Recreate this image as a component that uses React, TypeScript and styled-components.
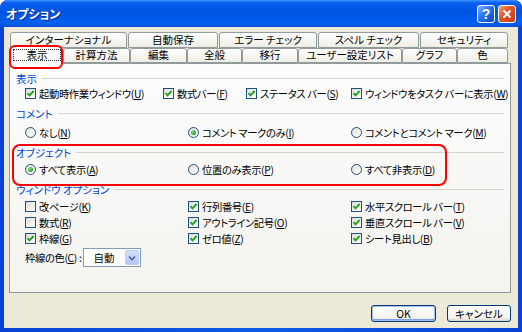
import styled, { createGlobalStyle } from "styled-components";

const GlobalStyle = createGlobalStyle`
    html, body {
        margin: 0;
        padding: 0;
        background: #ffffff;
    }
    body {
        font-family: "Noto Sans CJK JP", "Noto Sans", sans-serif;
        font-feature-settings: "palt";
        color: #000000;
    }
`;

const Window = styled.div`
    width: 522px;
    height: 332px;
    display: flex;
    flex-direction: column;
    border-radius: 8px 8px 0 0;
    overflow: hidden;
    background: linear-gradient(to right, #0842d6, #0d5ae8 50%, #0842d6);
`;

const TitleBar = styled.div`
    height: 27px;
    flex: none;
    display: flex;
    align-items: center;
    padding: 0 6px 0 6px;
    box-sizing: border-box;
    background: linear-gradient(
        to bottom,
        #3d95ff 0%,
        #0a5fee 10%,
        #0054e3 45%,
        #0160f0 85%,
        #0a4fd6 100%
    );
`;

const Title = styled.div`
    flex: 1;
    color: #ffffff;
    font-size: 12px;
    font-weight: 700;
    text-shadow: 1px 1px 0 #0b2f9a;
`;

const CaptionButton = styled.div<{ $variant: "help" | "close" }>`
    width: 18px;
    height: 18px;
    margin-left: 3px;
    box-sizing: border-box;
    border: 1px solid #ffffff;
    border-radius: 3px;
    display: flex;
    align-items: center;
    justify-content: center;
    color: #ffffff;
    font-family: "Liberation Sans", sans-serif;
    font-weight: 700;
    font-size: 14px;
    background: ${(p) =>
        p.$variant === "close"
            ? "linear-gradient(135deg, #f0a080 0%, #e2582c 40%, #c53a12 100%)"
            : "linear-gradient(135deg, #8bb8ff 0%, #2f76f0 40%, #1148c8 100%)"};
`;

const Body = styled.div`
    flex: 1;
    margin: 0 4px 4px 4px;
    background: #ece9d8;
    padding: 5px 0 6px 5px;
    display: flex;
    flex-direction: column;
`;

const TabStrip = styled.div`
    display: flex;
    flex-direction: column;
    margin-left: 1px;
    position: relative;
    z-index: 1;
`;

const TabRow = styled.div<{ $h: number; $gap: number }>`
    display: flex;
    height: ${(p) => p.$h}px;
    gap: ${(p) => p.$gap}px;
    align-items: flex-end;
`;

const Tab = styled.div<{ $w: number; $selected?: boolean }>`
    width: ${(p) => p.$w}px;
    height: ${(p) => (p.$selected ? "18px" : "100%")};
    margin-bottom: ${(p) => (p.$selected ? "-1px" : "0")};
    box-sizing: border-box;
    border: 1px solid #919b9c;
    border-bottom: ${(p) => (p.$selected ? "none" : "1px solid #919b9c")};
    border-radius: 3px 3px 0 0;
    background: ${(p) =>
        p.$selected ? "#fcfcfe" : "linear-gradient(#ffffff, #eeede5)"};
    display: flex;
    align-items: center;
    justify-content: center;
    font-size: 10.5px;
    line-height: 1;
    white-space: nowrap;
    position: relative;
`;

const FocusRect = styled.span`
    position: absolute;
    left: 2px;
    right: 1px;
    top: 2px;
    bottom: 3px;
    border: 1px dotted #333333;
    display: flex;
    align-items: center;
    justify-content: center;
`;

const Annotation = styled.span<{ $r: number }>`
    position: absolute;
    border: 2px solid #ff0000;
    border-radius: ${(p) => p.$r}px;
    pointer-events: none;
`;

const Panel = styled.div`
    width: 502px;
    height: 230px;
    box-sizing: border-box;
    border: 1px solid #919b9c;
    background: linear-gradient(#fcfcfe, #f4f3ee);
    padding: 7px 6px 0 6px;
    display: flex;
    flex-direction: column;
`;

const SectionLabel = styled.div<{ $mt?: number }>`
    height: 14px;
    margin-top: ${(p) => p.$mt ?? 0}px;
    display: flex;
    align-items: center;
    color: #0046d5;
    font-size: 10.5px;
    white-space: nowrap;
    &::after {
        content: "";
        flex: 1;
        height: 1px;
        margin-left: 5px;
        background: #d6d5c9;
    }
`;

const OptionRow = styled.div<{ $cols: string; $mt?: number }>`
    display: grid;
    grid-template-columns: ${(p) => p.$cols};
    height: 16px;
    margin-top: ${(p) => p.$mt ?? 0}px;
    padding-left: 9px;
    align-items: center;
`;

const Item = styled.label`
    display: flex;
    align-items: center;
    gap: 3px;
    font-size: 10.3px;
    white-space: nowrap;
    letter-spacing: -0.35px;
`;

const Box = styled.span`
    width: 11px;
    height: 11px;
    flex: none;
    box-sizing: border-box;
    border: 1px solid #1c5180;
    background: linear-gradient(135deg, #dcdcd7 0%, #f4f4f0 60%, #ffffff 100%);
    display: flex;
    align-items: center;
    justify-content: center;
`;

const Round = styled.span<{ $on?: boolean }>`
    width: 11px;
    height: 11px;
    flex: none;
    box-sizing: border-box;
    border: 1px solid #1c5180;
    border-radius: 50%;
    background: linear-gradient(135deg, #dcdcd7 0%, #f4f4f0 60%, #ffffff 100%);
    display: flex;
    align-items: center;
    justify-content: center;
    &::after {
        content: "";
        display: ${(p) => (p.$on ? "block" : "none")};
        width: 5px;
        height: 5px;
        border-radius: 50%;
        background: radial-gradient(circle at 35% 35%, #8ee07a, #21a121 70%);
    }
`;

const Highlight = styled.div`
    position: relative;
    display: flex;
    flex-direction: column;
`;

const ColorRow = styled.div`
    display: flex;
    align-items: center;
    gap: 2px;
    margin-top: 2px;
    padding-left: 9px;
    height: 19px;
    font-size: 10.3px;
    letter-spacing: -0.35px;
`;

const Select = styled.div`
    width: 58px;
    height: 19px;
    box-sizing: border-box;
    border: 1px solid #7f9db9;
    background: #ffffff;
    display: flex;
    align-items: center;
    padding: 0 1px 0 9px;
    font-size: 10.5px;
    letter-spacing: 0;
`;

const SelectValue = styled.span`
    flex: 1;
`;

const DropButton = styled.span`
    width: 14px;
    height: 15px;
    box-sizing: border-box;
    border: 1px solid #bad0f8;
    border-radius: 2px;
    background: linear-gradient(#d3e0fc, #b4c8f6);
    display: flex;
    align-items: center;
    justify-content: center;
`;

const Footer = styled.div`
    width: 502px;
    margin-top: 12px;
    display: flex;
    justify-content: flex-end;
    gap: 11px;
`;

const PushButton = styled.div<{ $w: number; $default?: boolean }>`
    width: ${(p) => p.$w}px;
    height: 17px;
    box-sizing: border-box;
    border: 1px solid #003c74;
    border-radius: 3px;
    background: linear-gradient(#ffffff, #f3f3ef 80%, #d6d0c5);
    box-shadow: ${(p) =>
        p.$default
            ? "inset 0 0 0 1px #a9c0ee, inset 0 -1px 0 1px #7f9fe0"
            : "none"};
    display: flex;
    align-items: center;
    justify-content: center;
    font-size: 10.5px;
`;

function Check() {
    return (
        <svg width="9" height="9" viewBox="0 0 9 9">
            <path
                d="M1.5 4.2 L3.5 6.3 L7.6 2"
                fill="none"
                stroke="#21a121"
                strokeWidth="1.9"
            />
        </svg>
    );
}

function Label({ text, k }: { text: string; k: string }) {
    return (
        <span>
            {text}(<u>{k}</u>)
        </span>
    );
}

function CheckItem({ text, k, on }: { text: string; k: string; on?: boolean }) {
    return (
        <Item>
            <Box>{on && <Check />}</Box>
            <Label text={text} k={k} />
        </Item>
    );
}

function RadioItem({ text, k, on }: { text: string; k: string; on?: boolean }) {
    return (
        <Item>
            <Round $on={on} />
            <Label text={text} k={k} />
        </Item>
    );
}

const row1 = [
    { w: 117, t: "インターナショナル" },
    { w: 90, t: "自動保存" },
    { w: 98, t: "エラー チェック" },
    { w: 101, t: "スペル チェック" },
    { w: 88, t: "セキュリティ" },
];

const row2 = [
    { w: 67, t: "計算方法" },
    { w: 57, t: "編集" },
    { w: 55, t: "全般" },
    { w: 56, t: "移行" },
    { w: 104, t: "ユーザー設定リスト" },
    { w: 55, t: "グラフ" },
    { w: 51, t: "色" },
];

const threeCols = "163px 163px 1fr";

export default function App() {
    return (
        <>
            <GlobalStyle />
            <Window>
                <TitleBar>
                    <Title>オプション</Title>
                    <CaptionButton $variant="help">?</CaptionButton>
                    <CaptionButton $variant="close">
                        <svg width="10" height="10" viewBox="0 0 10 10">
                            <path
                                d="M1.5 1.5 L8.5 8.5 M8.5 1.5 L1.5 8.5"
                                stroke="#ffffff"
                                strokeWidth="2"
                            />
                        </svg>
                    </CaptionButton>
                </TitleBar>
                <Body>
                    <TabStrip>
                        <TabRow $h={16} $gap={1}>
                            {row1.map((tab) => (
                                <Tab key={tab.t} $w={tab.w}>
                                    {tab.t}
                                </Tab>
                            ))}
                        </TabRow>
                        <TabRow $h={15} $gap={0}>
                            <Tab $w={53} $selected>
                                <FocusRect>表示</FocusRect>
                                <Annotation
                                    $r={6}
                                    style={{ left: -2, right: -1, top: -2, bottom: -5 }}
                                />
                            </Tab>
                            {row2.map((tab) => (
                                <Tab key={tab.t} $w={tab.w}>
                                    {tab.t}
                                </Tab>
                            ))}
                        </TabRow>
                    </TabStrip>
                    <Panel>
                        <SectionLabel>表示</SectionLabel>
                        <OptionRow $cols="138px 83px 105px 1fr">
                            <CheckItem text="起動時作業ウィンドウ" k="U" on />
                            <CheckItem text="数式バー" k="F" on />
                            <CheckItem text="ステータス バー" k="S" on />
                            <CheckItem text="ウィンドウをタスク バーに表示" k="W" on />
                        </OptionRow>

                        <SectionLabel $mt={5}>コメント</SectionLabel>
                        <OptionRow $cols={threeCols} $mt={4}>
                            <RadioItem text="なし" k="N" />
                            <RadioItem text="コメント マークのみ" k="I" on />
                            <RadioItem text="コメントとコメント マーク" k="M" />
                        </OptionRow>

                        <Highlight>
                            <SectionLabel $mt={5}>オブジェクト</SectionLabel>
                            <OptionRow $cols={threeCols} $mt={2}>
                                <RadioItem text="すべて表示" k="A" on />
                                <RadioItem text="位置のみ表示" k="P" />
                                <RadioItem text="すべて非表示" k="D" />
                            </OptionRow>
                            <Annotation
                                $r={8}
                                style={{ left: -4, top: 4, width: 431, height: 38 }}
                            />
                        </Highlight>

                        <SectionLabel $mt={5}>ウィンドウ オプション</SectionLabel>
                        <OptionRow $cols={threeCols} $mt={2}>
                            <CheckItem text="改ページ" k="K" />
                            <CheckItem text="行列番号" k="E" on />
                            <CheckItem text="水平スクロール バー" k="T" on />
                        </OptionRow>
                        <OptionRow $cols={threeCols}>
                            <CheckItem text="数式" k="R" />
                            <CheckItem text="アウトライン記号" k="O" on />
                            <CheckItem text="垂直スクロール バー" k="V" on />
                        </OptionRow>
                        <OptionRow $cols={threeCols}>
                            <CheckItem text="枠線" k="G" on />
                            <CheckItem text="ゼロ値" k="Z" on />
                            <CheckItem text="シート見出し" k="B" on />
                        </OptionRow>

                        <ColorRow>
                            <Label text="枠線の色" k="C" />:
                            <Select>
                                <SelectValue>自動</SelectValue>
                                <DropButton>
                                    <svg width="8" height="6" viewBox="0 0 8 6">
                                        <path
                                            d="M1 1.5 L4 4.5 L7 1.5"
                                            fill="none"
                                            stroke="#4d6185"
                                            strokeWidth="1.6"
                                        />
                                    </svg>
                                </DropButton>
                            </Select>
                        </ColorRow>
                    </Panel>
                    <Footer>
                        <PushButton $w={65} $default>
                            OK
                        </PushButton>
                        <PushButton $w={64}>キャンセル</PushButton>
                    </Footer>
                </Body>
            </Window>
        </>
    );
}
